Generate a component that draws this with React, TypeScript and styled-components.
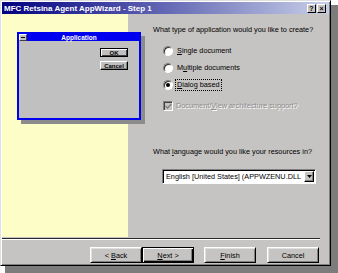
import React from 'react';
import styled, { createGlobalStyle, css } from 'styled-components';

const Global = createGlobalStyle`
  html, body { margin: 0; padding: 0; background: #ffffff; }
  * { box-sizing: border-box; }
  #root { width: 338px; height: 273px; }
`;

const Dialog = styled.div`
  width: 331px;
  height: 266px;
  background: #c6c4c2;
  border: 1px solid;
  border-color: #dfdfdf #000 #000 #dfdfdf;
  box-shadow: inset 1px 1px #fff, inset -1px -1px #808080, 6px 6px 0 1px #7c7c7c;
  padding: 1px;
  display: flex;
  flex-direction: column;
  font-family: "Liberation Sans", Arial, sans-serif;
  font-size: 7.3px;
  color: #000;
`;

const TitleBar = styled.div`
  flex: none;
  height: 12px;
  background: linear-gradient(90deg, #000080 0%, #c8d0e8 100%);
  display: flex;
  align-items: center;
  justify-content: space-between;
  padding: 0 3px 0 2px;
`;

const TitleText = styled.span`
  color: #fff;
  font-weight: bold;
  font-size: 8px;
  white-space: nowrap;
`;

const CaptionButtons = styled.div`
  display: flex;
  gap: 1px;
`;

const CaptionButton = styled.div`
  width: 9px;
  height: 9px;
  background: #c6c4c2;
  border: 1px solid;
  border-color: #fff #000 #000 #fff;
  display: flex;
  align-items: center;
  justify-content: center;
  font-size: 7px;
  font-weight: bold;
  line-height: 1;
`;

const Content = styled.div`
  flex: none;
  height: 223px;
  display: flex;
`;

const Illustration = styled.div`
  flex: none;
  width: 126px;
  background: #fdfdc8;
  padding: 18px 0 0 15px;
`;

const MiniWindow = styled.div`
  width: 124px;
  height: 88px;
  border: 2px solid #0000f0;
  background: #c0c0c0;
  box-shadow: 4px 4px 0 #8c8c8c;
  display: flex;
  flex-direction: column;
`;

const MiniTitle = styled.div`
  flex: none;
  height: 7px;
  background: #0000f0;
  display: flex;
  align-items: center;
`;

const SysBox = styled.div`
  flex: none;
  width: 8px;
  height: 7px;
  background: #c0c0c0;
  border: 1px solid;
  border-color: #fff #404040 #404040 #fff;
  display: flex;
  align-items: center;
  justify-content: center;
  &::after {
    content: '';
    width: 4px;
    height: 1px;
    background: #000;
  }
`;

const MiniTitleText = styled.span`
  flex: 1;
  text-align: center;
  color: #fff;
  font-weight: bold;
  font-size: 6.5px;
  line-height: 7px;
  padding-right: 8px;
`;

const MiniBody = styled.div`
  flex: 1;
  display: flex;
  flex-direction: column;
  align-items: flex-end;
  padding: 7px 11px 0 0;
  gap: 4px;
`;

const MiniButton = styled.div<{ $default?: boolean }>`
  width: 28px;
  height: 9px;
  background: #c0c0c0;
  font-weight: bold;
  font-size: 6px;
  display: flex;
  align-items: center;
  justify-content: center;
  border: 1px solid;
  ${(p) =>
    p.$default
      ? css`
          border-color: #000;
          box-shadow: inset 1px 1px #fff, inset -1px -1px #404040;
        `
      : css`
          border-color: #fff #000 #000 #fff;
          box-shadow: inset -1px -1px #808080;
        `}
`;

const Options = styled.div`
  flex: 1;
  display: flex;
  flex-direction: column;
  padding: 11px 0 0 25px;
`;

const Question = styled.div<{ $top?: number }>`
  height: 10px;
  line-height: 10px;
  white-space: nowrap;
  margin-top: ${(p) => p.$top ?? 0}px;
`;

const RadioGroup = styled.div`
  display: flex;
  flex-direction: column;
  gap: 7px;
  margin: 11px 0 0 10px;
`;

const OptionRow = styled.div`
  height: 10px;
  display: flex;
  align-items: center;
  gap: 3px;
  white-space: nowrap;
`;

const RadioCircle = styled.span<{ $checked?: boolean }>`
  flex: none;
  width: 10px;
  height: 10px;
  border-radius: 50%;
  background: #fff;
  border: 1px solid;
  border-color: #808080 #fff #fff #808080;
  box-shadow: inset 1px 1px #303030;
  display: flex;
  align-items: center;
  justify-content: center;
  &::after {
    content: '';
    width: 4px;
    height: 4px;
    border-radius: 50%;
    background: #000;
    display: ${(p) => (p.$checked ? 'block' : 'none')};
  }
`;

const Label = styled.span<{ $focused?: boolean }>`
  line-height: 10px;
  padding: 0 1px;
  outline: ${(p) => (p.$focused ? '1px dotted #000' : 'none')};
`;

const CheckRow = styled(OptionRow)`
  margin: 11px 0 0 10px;
`;

const CheckBox = styled.span`
  flex: none;
  width: 10px;
  height: 10px;
  background: #c6c4c2;
  border: 1px solid;
  border-color: #808080 #fff #fff #808080;
  box-shadow: inset 1px 1px #404040;
  display: flex;
  align-items: center;
  justify-content: center;
`;

const Etched = styled.span`
  color: #8c8c8c;
  text-shadow: 1px 1px #fff;
  line-height: 10px;
`;

const Combo = styled.div`
  margin: 12px 0 0 9px;
  width: 154px;
  height: 15px;
  background: #fff;
  border: 1px solid;
  border-color: #808080 #fff #fff #808080;
  box-shadow: inset 1px 1px #000;
  display: flex;
  align-items: center;
  padding: 1px 1px 1px 3px;
`;

const ComboText = styled.span`
  flex: 1;
  white-space: nowrap;
  overflow: hidden;
`;

const ComboButton = styled.span`
  flex: none;
  width: 10px;
  height: 11px;
  background: #c6c4c2;
  border: 1px solid;
  border-color: #fff #000 #000 #fff;
  box-shadow: inset -1px -1px #808080;
  display: flex;
  align-items: center;
  justify-content: center;
`;

const Separator = styled.div`
  flex: none;
  height: 2px;
  margin: 1px 9px 0 0;
  border-top: 1px solid #2a2a2a;
  border-bottom: 1px solid #fff;
`;

const ButtonRow = styled.div`
  flex: none;
  display: flex;
  margin-top: 7px;
  padding-left: 88px;
`;

const NavGroup = styled.div`
  display: flex;
  margin-right: 10px;
`;

const PushButton = styled.div<{ $default?: boolean; $gap?: number }>`
  width: 52px;
  height: 16px;
  margin-right: ${(p) => p.$gap ?? 0}px;
  background: #c6c4c2;
  display: flex;
  align-items: center;
  justify-content: center;
  white-space: pre;
  border: 1px solid;
  ${(p) =>
    p.$default
      ? css`
          border-color: #000;
          box-shadow: inset 1px 1px #fff, inset -1px -1px #000, inset -2px -2px #808080;
        `
      : css`
          border-color: #fff #000 #000 #fff;
          box-shadow: inset 1px 1px #dfdfdf, inset -1px -1px #808080;
        `}
`;

export default function App() {
  return (
    <>
      <Global />
      <Dialog>
        <TitleBar>
          <TitleText>MFC Retsina Agent AppWizard - Step 1</TitleText>
          <CaptionButtons>
            <CaptionButton>?</CaptionButton>
            <CaptionButton>×</CaptionButton>
          </CaptionButtons>
        </TitleBar>
        <Content>
          <Illustration>
            <MiniWindow>
              <MiniTitle>
                <SysBox />
                <MiniTitleText>Application</MiniTitleText>
              </MiniTitle>
              <MiniBody>
                <MiniButton $default>OK</MiniButton>
                <MiniButton>Cancel</MiniButton>
              </MiniBody>
            </MiniWindow>
          </Illustration>
          <Options>
            <Question>What type of application would you like to create?</Question>
            <RadioGroup>
              <OptionRow>
                <RadioCircle />
                <Label><u>S</u>ingle document</Label>
              </OptionRow>
              <OptionRow>
                <RadioCircle />
                <Label>M<u>u</u>ltiple documents</Label>
              </OptionRow>
              <OptionRow>
                <RadioCircle $checked />
                <Label $focused><u>D</u>ialog based</Label>
              </OptionRow>
            </RadioGroup>
            <CheckRow>
              <CheckBox>
                <svg width="7" height="7" viewBox="0 0 7 7">
                  <path d="M0.5 3 L2.5 5 L6.5 1" stroke="#808080" strokeWidth="1.4" fill="none" />
                </svg>
              </CheckBox>
              <Etched>Document/<u>V</u>iew architecture support?</Etched>
            </CheckRow>
            <Question $top={36}>What <u>l</u>anguage would you like your resources in?</Question>
            <Combo>
              <ComboText>English [United States] (APPWZENU.DLL</ComboText>
              <ComboButton>
                <svg width="5" height="3" viewBox="0 0 5 3">
                  <path d="M0 0 H5 L2.5 3 Z" fill="#000" />
                </svg>
              </ComboButton>
            </Combo>
          </Options>
        </Content>
        <Separator />
        <ButtonRow>
          <NavGroup>
            <PushButton>{'< '}<u>B</u>ack</PushButton>
            <PushButton $default><u>N</u>ext{' >'}</PushButton>
          </NavGroup>
          <PushButton $gap={11}><u>F</u>inish</PushButton>
          <PushButton>Cancel</PushButton>
        </ButtonRow>
      </Dialog>
    </>
  );
}
